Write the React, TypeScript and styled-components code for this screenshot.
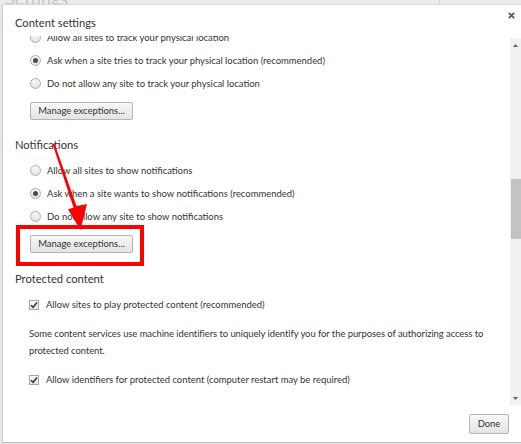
import React from 'react';
import styled, { createGlobalStyle } from 'styled-components';

const GlobalStyle = createGlobalStyle`
  html, body { margin: 0; padding: 0; background: #e6e6e6; }
  body { font-family: Lato, "Open Sans", sans-serif; color: #333; }
  * { box-sizing: border-box; }
`;

const Page = styled.div`
  position: relative;
  width: 521px;
  height: 444px;
  overflow: hidden;
  background: #e6e6e6;
  display: flex;
  flex-direction: column;
`;

const BackStrip = styled.div`
  flex: none;
  height: 4px;
  overflow: hidden;
  display: flex;
  align-items: flex-end;
  background: #ececec;
`;

const BackTitle = styled.div`
  flex: 1;
  padding-left: 5px;
  font-size: 18px;
  line-height: 18px;
  margin-bottom: -3px;
  color: #c4c4c4;
  white-space: nowrap;
`;

const BackSearch = styled.div`
  width: 82px;
  height: 20px;
  border: 1px solid #d2d2d2;
  border-right: none;
  margin-bottom: -4px;
`;

const Dialog = styled.div`
  flex: none;
  height: 439px;
  margin-left: 2px;
  background: #fff;
  border-top: 1px solid #d9d9d9;
  border-left: 1px solid #cdcdcd;
  border-bottom: 1px solid #bdbdbd;
  display: flex;
  flex-direction: column;
`;

const Header = styled.div`
  flex: none;
  height: 31px;
  display: flex;
  justify-content: space-between;
  align-items: flex-start;
  padding: 0 6px 0 12px;
`;

const Title = styled.h1`
  margin: 10px 0 0;
  font-size: 11.2px;
  line-height: 16px;
  font-weight: 400;
  color: #333;
`;

const CloseButton = styled.div`
  margin-top: 7px;
  width: 7px;
  height: 7px;
  display: flex;
`;

const ScrollArea = styled.div`
  flex: 1;
  min-height: 0;
  display: flex;
`;

const Viewport = styled.div`
  flex: 1;
  min-width: 0;
  overflow: hidden;
`;

const Scroller = styled.div<{ $offset: number }>`
  margin-top: ${(p) => -p.$offset}px;
  padding: 0 0 0 12px;
`;

const Section = styled.section<{ $gap: number }>`
  margin-top: ${(p) => p.$gap}px;
`;

const SectionTitle = styled.h2`
  margin: 0 0 4px;
  font-size: 11.2px;
  line-height: 20px;
  font-weight: 400;
  color: #333;
`;

const Options = styled.div`
  padding-left: 15px;
  display: flex;
  flex-direction: column;
  align-items: flex-start;
`;

const OptionRow = styled.label`
  height: 23px;
  display: flex;
  align-items: center;
  font-size: 9.45px;
  color: #333;
  white-space: nowrap;
`;

const RadioDot = styled.span<{ $checked?: boolean }>`
  width: 11px;
  height: 11px;
  border-radius: 50%;
  border: 1px solid #acacac;
  background: linear-gradient(#f8f8f8, #e4e4e4);
  margin-right: 6px;
  display: flex;
  align-items: center;
  justify-content: center;
  flex: none;
  &::after {
    content: '';
    width: 5px;
    height: 5px;
    border-radius: 50%;
    background: ${(p) => (p.$checked ? '#4a4a4a' : 'transparent')};
  }
`;

const CheckBox = styled.span`
  width: 10px;
  height: 10px;
  border: 1px solid #a6a6a6;
  background: linear-gradient(#f9f9f9, #e6e6e6);
  margin-left: -1px;
  margin-right: 7px;
  flex: none;
  display: flex;
  align-items: center;
  justify-content: center;
`;

const Button = styled.button<{ $width: number; $height: number }>`
  width: ${(p) => p.$width}px;
  height: ${(p) => p.$height}px;
  padding: 0;
  border: 1px solid #b4b4b4;
  border-radius: 2px;
  background: linear-gradient(#f7f7f7, #e4e4e4);
  font-family: Lato, "Open Sans", sans-serif;
  font-size: 9.45px;
  color: #333;
  line-height: 1;
`;

const ManageButton = styled(Button)`
  margin-top: 7px;
`;

const Paragraph = styled.p`
  margin: 9px 0 0 -1px;
  font-size: 9.45px;
  letter-spacing: -0.06px;
  line-height: 17px;
  color: #333;
  white-space: nowrap;
`;

const CheckRowSpaced = styled(OptionRow)`
  margin-top: 9px;
`;

const ScrollBar = styled.div`
  flex: none;
  width: 11px;
  margin-top: 2px;
  background: #f1f1f1;
  display: flex;
  flex-direction: column;
`;

const ScrollArrow = styled.div`
  flex: none;
  height: 14px;
  display: flex;
  align-items: center;
  justify-content: center;
`;

const Track = styled.div`
  flex: 1;
  display: flex;
  flex-direction: column;
  align-items: flex-end;
`;

const Thumb = styled.div<{ $top: number; $size: number }>`
  margin-top: ${(p) => p.$top}px;
  width: 10px;
  height: ${(p) => p.$size}px;
  background: #c3c3c3;
`;

const Footer = styled.div`
  flex: none;
  height: 37px;
  display: flex;
  align-items: center;
  justify-content: flex-end;
  padding-right: 12px;
`;

const Overlay = styled.svg`
  position: absolute;
  left: 0;
  top: 0;
  pointer-events: none;
`;

const Radio = ({ checked, children }: { checked?: boolean; children: React.ReactNode }) => (
  <OptionRow>
    <RadioDot $checked={checked} />
    {children}
  </OptionRow>
);

const CheckMark = () => (
  <svg width="8" height="8" viewBox="0 0 8 8">
    <path d="M1 4.2 L3.1 6.3 L7 1.4" fill="none" stroke="#3a3a3a" strokeWidth="1.6" />
  </svg>
);

export default function App() {
  return (
    <>
      <GlobalStyle />
      <Page>
        <BackStrip>
          <BackTitle>Settings</BackTitle>
          <BackSearch />
        </BackStrip>
        <Dialog>
          <Header>
            <Title>Content settings</Title>
            <CloseButton>
              <svg width="7" height="7" viewBox="0 0 7 7">
                <path d="M0.8 0.8 L6.2 6.2 M6.2 0.8 L0.8 6.2" stroke="#555" strokeWidth="1.7" />
              </svg>
            </CloseButton>
          </Header>
          <ScrollArea>
            <Viewport>
              <Scroller $offset={10}>
                <Options>
                  <Radio>Allow all sites to track your physical location</Radio>
                  <Radio checked>Ask when a site tries to track your physical location (recommended)</Radio>
                  <Radio>Do not allow any site to track your physical location</Radio>
                  <ManageButton $width={103} $height={18}>Manage exceptions...</ManageButton>
                </Options>
                <Section $gap={15}>
                  <SectionTitle>Notifications</SectionTitle>
                  <Options>
                    <Radio>Allow all sites to show notifications</Radio>
                    <Radio checked>Ask when a site wants to show notifications (recommended)</Radio>
                    <Radio>Do not allow any site to show notifications</Radio>
                    <ManageButton $width={103} $height={18}>Manage exceptions...</ManageButton>
                  </Options>
                </Section>
                <Section $gap={16}>
                  <SectionTitle>Protected content</SectionTitle>
                  <Options>
                    <OptionRow>
                      <CheckBox><CheckMark /></CheckBox>
                      Allow sites to play protected content (recommended)
                    </OptionRow>
                    <Paragraph>
                      Some content services use machine identifiers to uniquely identify you for the purposes of
                      authorizing access to
                      <br />
                      protected content.
                    </Paragraph>
                    <CheckRowSpaced>
                      <CheckBox><CheckMark /></CheckBox>
                      Allow identifiers for protected content (computer restart may be required)
                    </CheckRowSpaced>
                  </Options>
                </Section>
              </Scroller>
            </Viewport>
            <ScrollBar>
              <ScrollArrow>
                <svg width="5" height="3" viewBox="0 0 5 3"><path d="M0 3 L2.5 0 L5 3 Z" fill="#606060" /></svg>
              </ScrollArrow>
              <Track>
                <Thumb $top={127} $size={60} />
              </Track>
              <ScrollArrow>
                <svg width="5" height="3" viewBox="0 0 5 3"><path d="M0 0 L2.5 3 L5 0 Z" fill="#606060" /></svg>
              </ScrollArrow>
            </ScrollBar>
          </ScrollArea>
          <Footer>
            <Button $width={40} $height={20}>Done</Button>
          </Footer>
        </Dialog>
        <Overlay width="521" height="444" viewBox="0 0 521 444">
          <rect x="18" y="227" width="124" height="37" fill="none" stroke="#ff0000" strokeWidth="4" />
          <path d="M52.5 144 L54.5 143.5 L76.5 206 L87 204 L80.5 230 L68 209.5 L73.5 207.5 Z" fill="#ff0000" />
        </Overlay>
      </Page>
    </>
  );
}
